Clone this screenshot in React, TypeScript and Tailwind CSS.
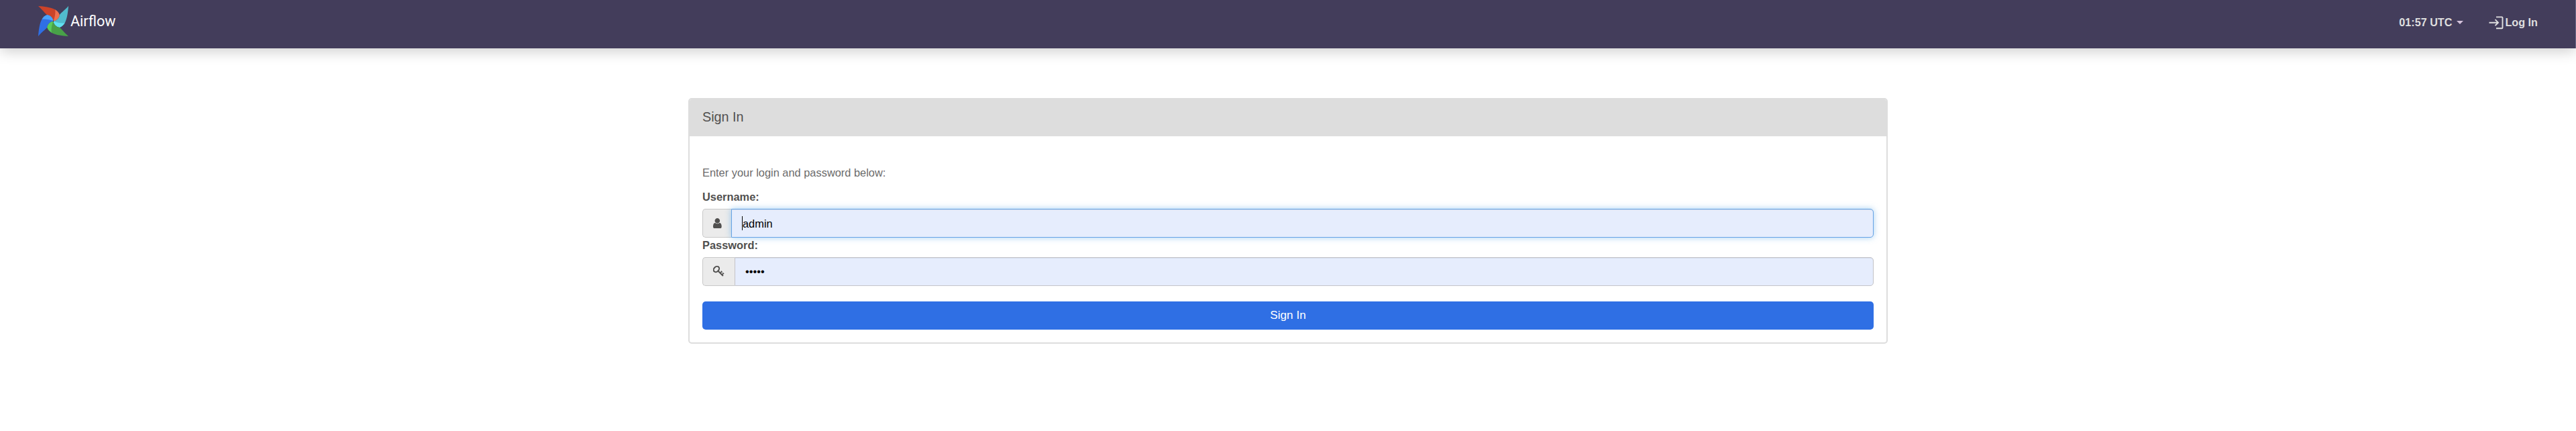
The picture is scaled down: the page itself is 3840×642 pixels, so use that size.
import React from "react";

const blades = [
  { dark: "#cc4329", light: "#ee7150", turn: 0 },
  { dark: "#51bbcd", light: "#62e0f0", turn: 90 },
  { dark: "#48a148", light: "#59cc5b", turn: 180 },
  { dark: "#2f6fe4", light: "#4aa3fb", turn: 270 },
];

function Pinwheel() {
  return (
    <svg viewBox="-67 -67 134 134" className="h-[45px] w-[45px]">
      {blades.map((b) => (
        <g key={b.turn} transform={`rotate(${b.turn})`}>
          <path fill={b.light} d="M0 0 C16 -2 26 -14 28 -27 C25 -38 17 -46 8 -51 L-4 -24 Z" />
          <path
            fill={b.dark}
            d="M-67 -67 C-42 -65 -12 -62 8 -51 C10 -40 8 -18 0 0 C-2 -16 -14 -26 -27 -28 C-34 -30 -42 -44 -67 -67 Z"
          />
        </g>
      ))}
      <circle r="3" fill="#433d5b" />
    </svg>
  );
}

function UserIcon() {
  return (
    <svg viewBox="256 128 1280 1536" className="h-[15.3px] w-[12.7px]" fill="#51504f">
      <path d="M1536 1399q0 109-62.500 187t-150.500 78h-854q-88 0-150.500-78t-62.500-187q0-85 8.500-160.500t31.500-152 58.500-131 94-89 134.500-34.500q131 128 313 128t313-128q76 0 134.500 34.500t94 89 58.500 131 31.500 152 8.500 160.500zm-256-887q0 159-112.500 271.500t-271.500 112.500-271.500-112.500-112.500-271.500 112.500-271.500 271.500-112.500 271.500 112.500 112.500 271.500z" />
    </svg>
  );
}

function KeyIcon() {
  return (
    <svg viewBox="0 0 17 17" className="mb-px h-[17px] w-[17px]" fill="none" stroke="#51504f">
      <ellipse cx="4.9" cy="5" rx="3.6" ry="4.7" strokeWidth="2" transform="rotate(45 4.9 5)" />
      <path d="M7.6 7.8L14.9 15" strokeWidth="2" />
      <path d="M10.6 10.8L12.7 8.7M13.1 13.3L15.2 11.2" strokeWidth="1.5" />
      <path d="M11.8 7.8L13.6 9.6M14.4 10.4L16.1 12.1" strokeWidth="1.4" />
    </svg>
  );
}

export default function App() {
  return (
    <div className="h-[642px] w-full bg-white font-['Liberation_Sans',Arial,sans-serif] text-[16.4px] text-[#51504f]">
      <nav className="flex h-[72px] justify-between border-r border-[#6d6a88] bg-[#433d5b] pr-[56px] pl-[57px] shadow-[0_4px_20px_rgba(0,0,0,0.2)]">
        <a className="flex h-[63px] items-center text-white">
          <Pinwheel />
          <span className="ml-[3px] pt-px font-['Roboto',sans-serif] text-[21.6px] leading-none">Airflow</span>
        </a>
        <div className="flex h-[67px] items-center text-[16.2px] font-bold text-[#dfdfdf]">
          <span>01:57 UTC</span>
          <svg viewBox="0 0 10 5" className="mr-[38px] ml-[7px] h-[5px] w-[10px]">
            <path fill="#d5c3dc" d="M0 0H10L5 5Z" />
          </svg>
          <svg viewBox="0 0 24 20" className="h-5 w-6" fill="none" stroke="#dfdfdf" strokeWidth="1.9">
            <path d="M11 1.4H19.5Q20.5 1.4 20.5 2.4V17.2Q20.5 18.2 19.5 18.2H11M0.5 9.7H14M9.5 5.2L14 9.7L9.5 14.2" />
          </svg>
          <span>Log In</span>
        </div>
      </nav>
      <main className="mx-auto mt-[74px] h-[366px] w-[1788px] overflow-hidden rounded-[5px] border-2 border-[#ddd]">
        <div className="flex h-[55px] items-center bg-[#ddd] pb-px pl-[19px] text-[19.8px]">Sign In</div>
        <form className="flex flex-col px-[19px] pt-[44px]">
          <p className="h-[36px] leading-[21px] text-[#6b6b6b]">Enter your login and password below:</p>
          <label className="h-[28px] leading-[20px] font-bold">Username:</label>
          <div className="flex h-[43px]">
            <span className="flex w-[43px] items-center rounded-l-[5px] border border-r-0 border-[#c8c8c8] bg-[#ebebeb] pl-[15px]">
              <UserIcon />
            </span>
            <div className="flex flex-1 items-center rounded-r-[5px] border border-[#66a3e5] bg-[#e6edfd] pl-[15px] text-black shadow-[inset_0_1px_1px_rgba(0,0,0,0.075),0_0_10px_rgba(102,175,233,0.6)]">
              <span className="h-[21px] w-px bg-black" />
              <span className="pt-px">admin</span>
            </div>
          </div>
          <label className="h-[29px] leading-[23px] font-bold">Password:</label>
          <div className="flex h-[43px]">
            <span className="flex w-[48px] items-center rounded-l-[5px] border border-r-0 border-[#c8c8c8] bg-[#ebebeb] pl-[15px]">
              <KeyIcon />
            </span>
            <div className="flex flex-1 items-center rounded-r-[5px] border border-[#c4c4c8] bg-[#e6edfd] pl-[15px] shadow-[inset_0_1px_1px_rgba(0,0,0,0.075)]">
              <span className="text-[16.4px] text-black">•••••</span>
            </div>
          </div>
          <button type="button" className="mt-[23px] h-[42px] rounded-[5px] bg-[#2f6fe4] text-[17.2px] text-white">
            Sign In
          </button>
        </form>
      </main>
    </div>
  );
}
